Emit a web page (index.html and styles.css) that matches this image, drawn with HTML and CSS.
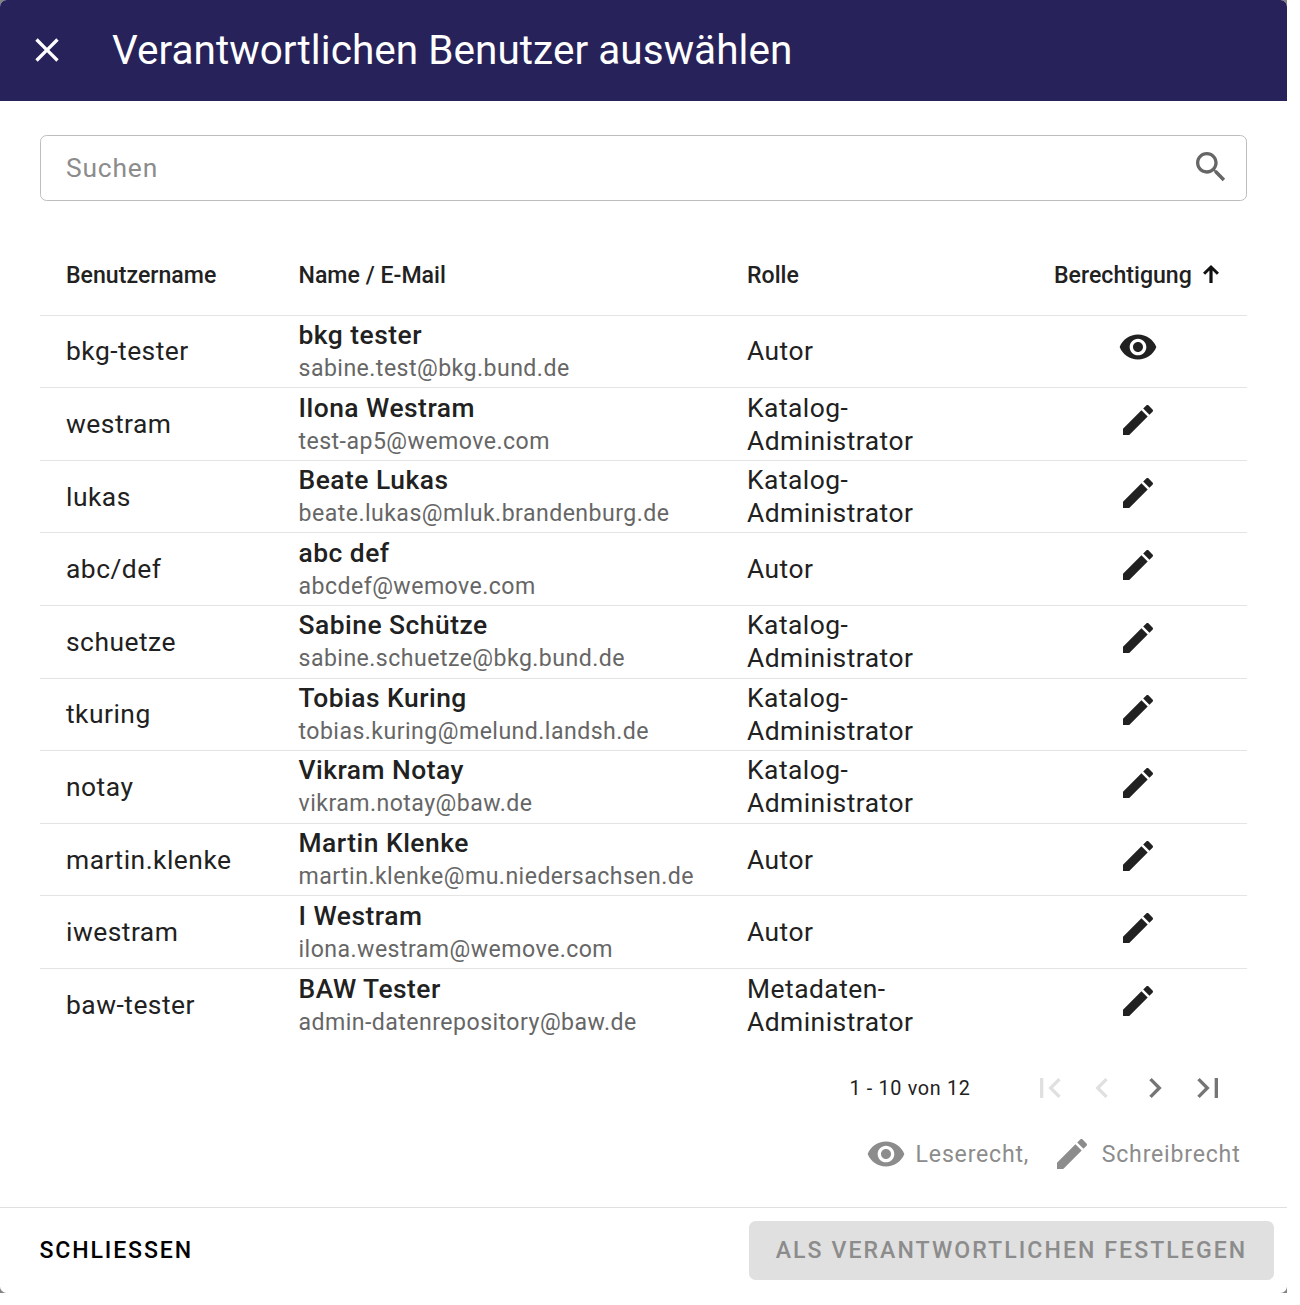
FILE: index.html
```html
<!DOCTYPE html>
<html lang="de">
<head>
<meta charset="utf-8">
<title>Verantwortlichen Benutzer auswählen</title>
<link rel="stylesheet" href="styles.css">
</head>
<body>
<svg class="sprite" aria-hidden="true">
<symbol id="eye" viewBox="0 0 24 24"><path d="M12 4.5C7 4.5 2.73 7.61 1 12c1.73 4.39 6 7.5 11 7.5s9.27-3.11 11-7.5c-1.73-4.39-6-7.5-11-7.5zM12 17c-2.76 0-5-2.24-5-5s2.24-5 5-5 5 2.24 5 5-2.24 5-5 5zm0-8c-1.66 0-3 1.34-3 3s1.34 3 3 3 3-1.34 3-3-1.34-3-3-3z"/></symbol>
<symbol id="pen" viewBox="0 0 24 24"><path d="M3 17.25V21h3.75L17.81 9.94l-3.75-3.75L3 17.25zM20.71 7.04c.39-.39.39-1.02 0-1.41l-2.34-2.34c-.39-.39-1.02-.39-1.41 0l-1.83 1.83 3.75 3.75 1.83-1.83z"/></symbol>
</svg>
<div class="backdrop">
<main class="dialog">
<header class="toolbar">
<svg class="close" viewBox="0 0 24 24"><path d="M19 6.41L17.59 5 12 10.59 6.41 5 5 6.41 10.59 12 5 17.59 6.41 19 12 13.41 17.59 19 19 17.59 13.41 12z"/></svg>
<h1>Verantwortlichen Benutzer auswählen</h1>
</header>
<section class="content">
<div class="search"><span>Suchen</span><svg viewBox="0 0 24 24"><path d="M15.5 14h-.79l-.28-.27C15.41 12.59 16 11.11 16 9.5 16 5.91 13.09 3 9.5 3S3 5.91 3 9.5 5.91 16 9.5 16c1.61 0 3.09-.59 4.23-1.57l.27.28v.79l5 4.99L20.49 19l-4.99-5zm-6 0C7.01 14 5 11.99 5 9.5S7.01 5 9.5 5 14 7.01 14 9.5 11.99 14 9.5 14z"/></svg></div>
<div class="table">
<div class="row head"><span>Benutzername</span><span>Name / E-Mail</span><span>Rolle</span><span class="sort">Berechtigung<svg viewBox="0 0 16 18"><path d="M6.4 18V5.6L2.2 9.8 0 7.8 8 0l8 7.8-2.2 2-4.2-4.2V18z"/></svg></span></div>
<div class="row"><span>bkg-tester</span><div><b>bkg tester</b><small>sabine.test@bkg.bund.de</small></div><span>Autor</span><svg class="icon"><use href="#eye"/></svg></div>
<div class="row"><span>westram</span><div><b>Ilona Westram</b><small>test-ap5@wemove.com</small></div><span>Katalog-Administrator</span><svg class="icon"><use href="#pen"/></svg></div>
<div class="row"><span>lukas</span><div><b>Beate Lukas</b><small>beate.lukas@mluk.brandenburg.de</small></div><span>Katalog-Administrator</span><svg class="icon"><use href="#pen"/></svg></div>
<div class="row"><span>abc/def</span><div><b>abc def</b><small>abcdef@wemove.com</small></div><span>Autor</span><svg class="icon"><use href="#pen"/></svg></div>
<div class="row"><span>schuetze</span><div><b>Sabine Schütze</b><small>sabine.schuetze@bkg.bund.de</small></div><span>Katalog-Administrator</span><svg class="icon"><use href="#pen"/></svg></div>
<div class="row"><span>tkuring</span><div><b>Tobias Kuring</b><small>tobias.kuring@melund.landsh.de</small></div><span>Katalog-Administrator</span><svg class="icon"><use href="#pen"/></svg></div>
<div class="row"><span>notay</span><div><b>Vikram Notay</b><small>vikram.notay@baw.de</small></div><span>Katalog-Administrator</span><svg class="icon"><use href="#pen"/></svg></div>
<div class="row"><span>martin.klenke</span><div><b>Martin Klenke</b><small>martin.klenke@mu.niedersachsen.de</small></div><span>Autor</span><svg class="icon"><use href="#pen"/></svg></div>
<div class="row"><span>iwestram</span><div><b>I Westram</b><small>ilona.westram@wemove.com</small></div><span>Autor</span><svg class="icon"><use href="#pen"/></svg></div>
<div class="row"><span>baw-tester</span><div><b>BAW Tester</b><small>admin-datenrepository@baw.de</small></div><span>Metadaten-Administrator</span><svg class="icon"><use href="#pen"/></svg></div>
</div>
<nav class="pager"><span>1 - 10 von 12</span>
<svg class="off" viewBox="0 0 24 24"><path d="M18.41 16.59L13.82 12l4.59-4.59L17 6l-6 6 6 6zM6 6h2v12H6z"/></svg>
<svg class="off" viewBox="0 0 24 24"><path d="M15.41 7.41L14 6l-6 6 6 6 1.41-1.41L10.83 12z"/></svg>
<svg viewBox="0 0 24 24"><path d="M10 6L8.59 7.41 13.17 12l-4.58 4.59L10 18l6-6z"/></svg>
<svg viewBox="0 0 24 24"><path d="M5.59 7.41L10.18 12l-4.59 4.59L7 18l6-6-6-6zM16 6h2v12h-2z"/></svg>
</nav>
<div class="legend"><svg><use href="#eye"/></svg><span>Leserecht,</span><svg class="second"><use href="#pen"/></svg><span>Schreibrecht</span></div>
</section>
<footer class="actions"><button class="plain">SCHLIESSEN</button><button class="submit" disabled>ALS VERANTWORTLICHEN FESTLEGEN</button></footer>
</main>
</div>
</body>
</html>
```
FILE: styles.css
```css
* { box-sizing: border-box; }
body { margin: 0; background: #fff; font-family: Roboto, sans-serif; color: #212121; }
svg { fill: currentColor; flex: none; }
.sprite { display: none; }
.backdrop { width: 1287px; height: 1293px; background: #848484; }
.dialog { display: flex; flex-direction: column; height: 100%; background: #fff; border-radius: 6.6px; overflow: hidden; }
.toolbar { display: flex; align-items: center; height: 101px; padding: 0 0 1px 26.5px; background: #28225a; color: #fff; }
.close { width: 40px; height: 40px; }
h1 { margin: 0 0 0 45.5px; font-size: 40.5px; line-height: 50px; font-weight: 400; letter-spacing: .04px; }
.content { flex: 1; padding: 34px 40px 0; }
.search { display: flex; align-items: center; justify-content: space-between; height: 66px; padding: 0 15px 0 25px; border: 1px solid #bdbdbd; border-radius: 6.6px; font-size: 26.4px; letter-spacing: .825px; color: #8c8c8c; }
.search svg { width: 40px; height: 40px; margin-top: -2px; color: #666; }
.table { padding-top: 33.5px; }
.row { display: grid; grid-template-columns: 232.5px 448.5px 280px 246px; align-items: center; height: 72.6px; border-bottom: 1px solid #e4e4e4; font-size: 26.4px; line-height: 33px; letter-spacing: .49px; }
.row:last-child { border-bottom: 0; }
.row > * { padding-left: 26px; }
.row > span, .row > div { padding-top: .9px; }
.row > span:nth-child(3) { padding-right: 60px; }
.head { height: 81.2px; font-size: 23.1px; font-weight: 500; letter-spacing: .02px; }
.row.head > span { padding-top: 2px; }
.row b, .row small { display: block; }
.row b { font-weight: 500; }
.row small { font-size: 23.1px; letter-spacing: .46px; color: #666; }
.row > .icon { width: 40px; height: 40px; padding: 0; margin: -8.2px 0 0 116.5px; }
.row > .sort { display: flex; align-items: center; padding-left: 53px; }
.sort svg { width: 16px; height: 18px; margin-left: 11px; margin-top: -3px; color: #111; }
.pager { display: flex; align-items: center; justify-content: flex-end; height: 66px; margin-top: 13.3px; padding-right: 19px; font-size: 19.8px; letter-spacing: .68px; }
.pager span { margin-right: 59px; padding-top: 1px; }
.pager svg { width: 40px; height: 40px; margin-left: 12.8px; color: #757575; }
.pager span + svg { margin-left: 0; }
.pager .off { color: #e0e0e0; }
.legend { display: flex; align-items: center; justify-content: flex-end; height: 66px; padding-right: 6.5px; font-size: 23.1px; letter-spacing: .8px; color: #8c8c8c; }
.legend span { padding-top: 1px; }
.legend svg { width: 40px; height: 40px; margin-right: 9.5px; }
.legend .second { margin-left: 23px; }
.actions { display: flex; align-items: center; justify-content: space-between; height: 86px; padding: 0 13px 0 39.5px; border-top: 1px solid #e0e0e0; }
button { padding: 0; border: 0; background: none; font: 500 23.1px/58px Roboto, sans-serif; letter-spacing: 2.06px; color: #000; }
.plain { letter-spacing: 1.85px; }
.submit { width: 525px; height: 59px; border-radius: 6.6px; background: #e0e0e0; color: #8c8c8c; }
```
